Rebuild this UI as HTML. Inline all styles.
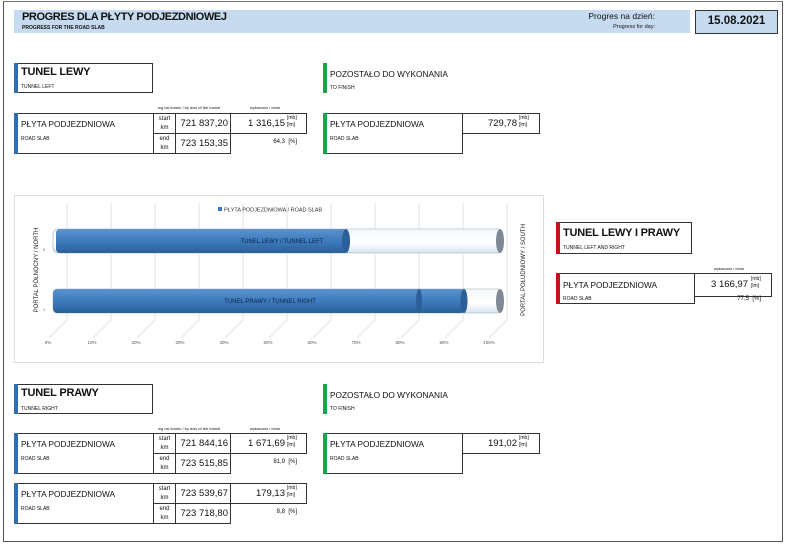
<!DOCTYPE html>
<html><head><meta charset="utf-8"><style>
*{margin:0;padding:0;box-sizing:border-box}
body{width:788px;height:545px;background:#fff;font-family:"Liberation Sans",sans-serif;position:relative;overflow:hidden;color:#111}
.a{position:absolute}
.bx{position:absolute;border:1.5px solid #333;background:#fff}
.bar{position:absolute;width:4px}
.t1{font-size:11px;font-weight:bold;letter-spacing:-0.2px}
.t2{font-size:8.3px}
.s{font-size:5px}
.v{font-size:9.5px;text-align:right}
</style></head><body>
<div class="a" style="left:3px;top:1px;width:780px;height:541px;border:1.5px solid #555;border-top-color:#777"></div>
<div class="a" style="left:14px;top:10px;width:676px;height:23px;background:#c6dbf0"></div>
<div class="a" style="left:22px;top:11px;font-size:11px;font-weight:bold;letter-spacing:-0.4px">PROGRES DLA PŁYTY PODJEZDNIOWEJ</div>
<div class="a s" style="left:22px;top:25px;font-weight:bold">PROGRESS FOR THE ROAD SLAB</div>
<div class="a" style="left:560px;top:11px;width:95px;text-align:right;font-size:8.5px">Progres na dzień:</div>
<div class="a" style="left:560px;top:24px;width:95px;text-align:right;font-size:5.5px">Progress for day:</div>
<div class="a" style="left:695px;top:10px;width:83px;height:24px;background:#c6dbf0;border:1.5px solid #333;font-size:11.5px;font-weight:bold;text-align:center;line-height:21px">15.08.2021</div>

<!-- TUNEL LEWY -->
<div class="bx" style="left:14px;top:63px;width:139px;height:30px"></div>
<div class="bar" style="left:14px;top:63px;height:30px;background:#2e6eb0"></div>
<div class="a t1" style="left:21px;top:66px">TUNEL LEWY</div>
<div class="a s" style="left:21px;top:84px">TUNNEL LEFT</div>
<div class="a" style="left:158px;top:105px;font-size:4px">wg osi tunelu / by axis of the tunnel</div>
<div class="a" style="left:250px;top:105px;font-size:4px">wykonano / done</div>
<div class="bx" style="left:14px;top:113px;width:140px;height:41px"></div>
<div class="bar" style="left:14px;top:113px;height:41px;background:#2e6eb0"></div>
<div class="a t2" style="left:21px;top:119px">PŁYTA PODJEZDNIOWA</div>
<div class="a s" style="left:21px;top:136px">ROAD SLAB</div>
<div class="bx" style="left:153px;top:113px;width:23px;height:21px"></div>
<div class="bx" style="left:153px;top:133px;width:23px;height:21px"></div>
<div class="bx" style="left:175px;top:113px;width:56px;height:21px"></div>
<div class="bx" style="left:175px;top:133px;width:56px;height:21px"></div>
<div class="bx" style="left:230px;top:113px;width:77px;height:21px"></div>
<div class="a" style="left:153px;top:115px;width:23px;text-align:center;font-size:6px;line-height:9px">start<br>km</div>
<div class="a" style="left:153px;top:135px;width:23px;text-align:center;font-size:6px;line-height:9px">end<br>km</div>
<div class="a v" style="left:175px;top:118px;width:53px">721 837,20</div>
<div class="a v" style="left:175px;top:138px;width:53px">723 153,35</div>
<div class="a v" style="left:230px;top:118px;width:55px">1 316,15</div>
<div class="a s" style="left:287px;top:115px;line-height:7px">[mb]<br>[lm]</div>
<div class="a" style="left:230px;top:139px;width:67px;text-align:right;font-size:6px">64,3 &nbsp;[%]</div>

<!-- POZOSTALO 1 -->
<div class="bar" style="left:323px;top:63px;height:30px;background:#1ea34a"></div>
<div class="a t2" style="left:330px;top:69px">POZOSTAŁO DO WYKONANIA</div>
<div class="a s" style="left:330px;top:85px">TO FINISH</div>
<div class="bx" style="left:323px;top:113px;width:140px;height:41px"></div>
<div class="bar" style="left:323px;top:113px;height:41px;background:#1ea34a"></div>
<div class="a t2" style="left:330px;top:119px">PŁYTA PODJEZDNIOWA</div>
<div class="a s" style="left:330px;top:136px">ROAD SLAB</div>
<div class="bx" style="left:462px;top:113px;width:78px;height:21px"></div>
<div class="a v" style="left:462px;top:118px;width:55px">729,78</div>
<div class="a s" style="left:519px;top:115px;line-height:7px">[mb]<br>[lm]</div>

<!-- CHART -->
<svg class="a" style="left:14px;top:195px" width="530" height="168" viewBox="14 195 530 168">
<defs>
<linearGradient id="bl" x1="0" y1="0" x2="0" y2="1"><stop offset="0" stop-color="#5b93cf"/><stop offset=".5" stop-color="#3d7bbd"/><stop offset="1" stop-color="#2a5f99"/></linearGradient>
<linearGradient id="wh" x1="0" y1="0" x2="0" y2="1"><stop offset="0" stop-color="#f4f8fc"/><stop offset=".6" stop-color="#ffffff"/><stop offset="1" stop-color="#d6e2ee"/></linearGradient>
</defs>
<rect x="14.5" y="195.5" width="529" height="167" fill="#fff" stroke="#ddd"/>
<g stroke="#e2e2e2" stroke-width="1" fill="none">
<path d="M67 203V320L49 338M111 203V320L93 338M155 203V320L137 338M199 203V320L181 338M243 203V320L225 338M287 203V320L269 338M331 203V320L313 338M375 203V320L357 338M419 203V320L401 338M463 203V320L445 338M507 203V320L489 338"/>
</g>
<rect x="218" y="207" width="4" height="4" fill="#3d7bbd"/>
<text x="224" y="211.5" font-size="5.5" fill="#333" font-family="Liberation Sans">PŁYTA PODJEZDNIOWA / ROAD SLAB</text>
<rect x="53" y="229" width="450" height="24" rx="5" fill="url(#wh)" stroke="#9aa" stroke-width=".6"/>
<ellipse cx="500" cy="241" rx="4" ry="12" fill="#7f8a96"/>
<rect x="56" y="229" width="292" height="24" rx="4" fill="url(#bl)"/>
<ellipse cx="346" cy="241" rx="4" ry="12" fill="#2a5f99"/>
<text x="282" y="243" text-anchor="middle" font-size="6" fill="#0d2447" font-family="Liberation Sans">TUNEL LEWY / TUNNEL  LEFT</text>
<rect x="53" y="289" width="450" height="24" rx="5" fill="url(#wh)" stroke="#9aa" stroke-width=".6"/>
<ellipse cx="500" cy="301" rx="4" ry="12" fill="#7f8a96"/>
<rect x="53" y="289" width="412" height="24" rx="4" fill="url(#bl)"/>
<ellipse cx="419" cy="301" rx="3" ry="12" fill="#2a5f99"/>
<ellipse cx="464" cy="301" rx="3.5" ry="12" fill="#2a5f99"/>
<text x="270" y="303" text-anchor="middle" font-size="6" fill="#0d2447" font-family="Liberation Sans">TUNEL PRAWY / TUNNEL  RIGHT</text>
<text x="43" y="251" font-size="4" fill="#555">2</text>
<text x="43" y="311" font-size="4" fill="#555">1</text>
<g font-size="4.5" fill="#555" font-family="Liberation Sans" text-anchor="middle">
<text x="48" y="344">0%</text><text x="92" y="344">10%</text><text x="136" y="344">20%</text><text x="180" y="344">30%</text><text x="224" y="344">40%</text><text x="268" y="344">50%</text><text x="312" y="344">60%</text><text x="356" y="344">70%</text><text x="400" y="344">80%</text><text x="444" y="344">90%</text><text x="489" y="344">100%</text>
</g>
<text transform="translate(38,270) rotate(-90)" text-anchor="middle" font-size="6" fill="#222" font-family="Liberation Sans">PORTAL PÓŁNOCNY / NORTH</text>
<text transform="translate(525,270) rotate(-90)" text-anchor="middle" font-size="6" fill="#222" font-family="Liberation Sans">PORTAL POŁUDNIOWY / SOUTH</text>
</svg>

<!-- LEWY I PRAWY -->
<div class="bx" style="left:556px;top:222px;width:136px;height:32px"></div>
<div class="bar" style="left:556px;top:222px;height:32px;background:#c0141c"></div>
<div class="a t1" style="left:563px;top:227px">TUNEL LEWY I PRAWY</div>
<div class="a s" style="left:563px;top:245px">TUNNEL LEFT AND RIGHT</div>
<div class="a" style="left:714px;top:266px;font-size:4px">wykonano / done</div>
<div class="bx" style="left:556px;top:273px;width:139px;height:31px"></div>
<div class="bar" style="left:556px;top:273px;height:31px;background:#c0141c"></div>
<div class="a t2" style="left:563px;top:280px">PŁYTA PODJEZDNIOWA</div>
<div class="a s" style="left:563px;top:296px">ROAD SLAB</div>
<div class="bx" style="left:694px;top:273px;width:78px;height:24px"></div>
<div class="a v" style="left:694px;top:279px;width:54px">3 166,97</div>
<div class="a s" style="left:751px;top:276px;line-height:7px">[mb]<br>[lm]</div>
<div class="a" style="left:694px;top:296px;width:67px;text-align:right;font-size:6px">77,5 &nbsp;[%]</div>

<!-- TUNEL PRAWY -->
<div class="bx" style="left:14px;top:384px;width:139px;height:30px"></div>
<div class="bar" style="left:14px;top:384px;height:30px;background:#2e6eb0"></div>
<div class="a t1" style="left:21px;top:387px">TUNEL PRAWY</div>
<div class="a s" style="left:21px;top:406px">TUNNEL RIGHT</div>
<div class="a" style="left:158px;top:426px;font-size:4px">wg osi tunelu / by axis of the tunnel</div>
<div class="a" style="left:250px;top:426px;font-size:4px">wykonano / done</div>

<div class="bx" style="left:14px;top:433px;width:140px;height:41px"></div>
<div class="bar" style="left:14px;top:433px;height:41px;background:#2e6eb0"></div>
<div class="a t2" style="left:21px;top:439px">PŁYTA PODJEZDNIOWA</div>
<div class="a s" style="left:21px;top:456px">ROAD SLAB</div>
<div class="bx" style="left:153px;top:433px;width:23px;height:21px"></div>
<div class="bx" style="left:153px;top:453px;width:23px;height:21px"></div>
<div class="bx" style="left:175px;top:433px;width:56px;height:21px"></div>
<div class="bx" style="left:175px;top:453px;width:56px;height:21px"></div>
<div class="bx" style="left:230px;top:433px;width:77px;height:21px"></div>
<div class="a" style="left:153px;top:435px;width:23px;text-align:center;font-size:6px;line-height:9px">start<br>km</div>
<div class="a" style="left:153px;top:455px;width:23px;text-align:center;font-size:6px;line-height:9px">end<br>km</div>
<div class="a v" style="left:175px;top:438px;width:53px">721 844,16</div>
<div class="a v" style="left:175px;top:458px;width:53px">723 515,85</div>
<div class="a v" style="left:230px;top:438px;width:55px">1 671,69</div>
<div class="a s" style="left:287px;top:435px;line-height:7px">[mb]<br>[lm]</div>
<div class="a" style="left:230px;top:459px;width:67px;text-align:right;font-size:6px">81,9 &nbsp;[%]</div>

<div class="bx" style="left:14px;top:483px;width:140px;height:41px"></div>
<div class="bar" style="left:14px;top:483px;height:41px;background:#2e6eb0"></div>
<div class="a t2" style="left:21px;top:489px">PŁYTA PODJEZDNIOWA</div>
<div class="a s" style="left:21px;top:506px">ROAD SLAB</div>
<div class="bx" style="left:153px;top:483px;width:23px;height:21px"></div>
<div class="bx" style="left:153px;top:503px;width:23px;height:21px"></div>
<div class="bx" style="left:175px;top:483px;width:56px;height:21px"></div>
<div class="bx" style="left:175px;top:503px;width:56px;height:21px"></div>
<div class="bx" style="left:230px;top:483px;width:77px;height:21px"></div>
<div class="a" style="left:153px;top:485px;width:23px;text-align:center;font-size:6px;line-height:9px">start<br>km</div>
<div class="a" style="left:153px;top:505px;width:23px;text-align:center;font-size:6px;line-height:9px">end<br>km</div>
<div class="a v" style="left:175px;top:488px;width:53px">723 539,67</div>
<div class="a v" style="left:175px;top:508px;width:53px">723 718,80</div>
<div class="a v" style="left:230px;top:488px;width:55px">179,13</div>
<div class="a s" style="left:287px;top:485px;line-height:7px">[mb]<br>[lm]</div>
<div class="a" style="left:230px;top:509px;width:67px;text-align:right;font-size:6px">8,8 &nbsp;[%]</div>

<!-- POZOSTALO 2 -->
<div class="bar" style="left:323px;top:384px;height:30px;background:#1ea34a"></div>
<div class="a t2" style="left:330px;top:390px">POZOSTAŁO DO WYKONANIA</div>
<div class="a s" style="left:330px;top:406px">TO FINISH</div>
<div class="bx" style="left:323px;top:433px;width:140px;height:41px"></div>
<div class="bar" style="left:323px;top:433px;height:41px;background:#1ea34a"></div>
<div class="a t2" style="left:330px;top:439px">PŁYTA PODJEZDNIOWA</div>
<div class="a s" style="left:330px;top:456px">ROAD SLAB</div>
<div class="bx" style="left:462px;top:433px;width:78px;height:21px"></div>
<div class="a v" style="left:462px;top:438px;width:55px">191,02</div>
<div class="a s" style="left:519px;top:435px;line-height:7px">[mb]<br>[lm]</div>
</body></html>
